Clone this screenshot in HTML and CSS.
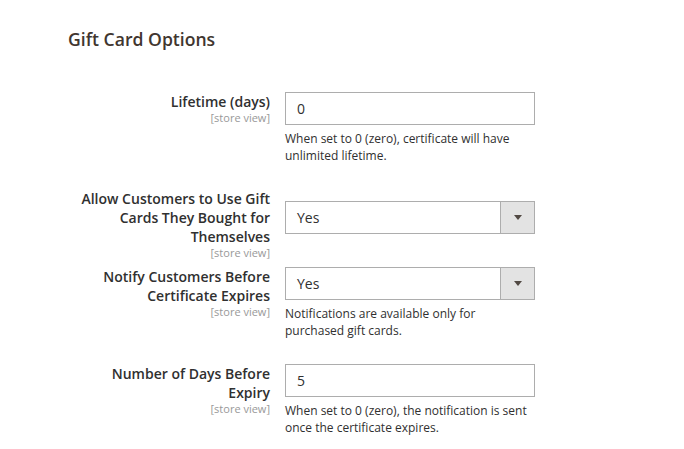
FILE: index.html
```html
<!DOCTYPE html>
<html lang="en">
<head>
<meta charset="utf-8">
<title>Gift Card Options</title>
<link rel="stylesheet" href="styles.css">
</head>
<body>
<div class="page">
  <h2 class="section-title">Gift Card Options</h2>
  <div class="config">
    <div class="row row-note">
      <div class="label"><span class="label-text">Lifetime (days)</span><span class="scope">[store view]</span></div>
      <div class="value">
        <div class="input">0</div>
        <p class="note">When set to 0 (zero), certificate will have unlimited lifetime.</p>
      </div>
    </div>
    <div class="row">
      <div class="label"><span class="label-text">Allow Customers to Use Gift Cards They Bought for Themselves</span><span class="scope">[store view]</span></div>
      <div class="value value-offset">
        <div class="select"><span class="select-text">Yes</span><span class="select-btn"><span class="arrow"></span></span></div>
      </div>
    </div>
    <div class="row row-note">
      <div class="label"><span class="label-text">Notify Customers Before Certificate Expires</span><span class="scope">[store view]</span></div>
      <div class="value">
        <div class="select"><span class="select-text">Yes</span><span class="select-btn"><span class="arrow"></span></span></div>
        <p class="note">Notifications are available only for purchased gift cards.</p>
      </div>
    </div>
    <div class="row row-note">
      <div class="label"><span class="label-text">Number of Days Before Expiry</span><span class="scope">[store view]</span></div>
      <div class="value">
        <div class="input">5</div>
        <p class="note">When set to 0 (zero), the notification is sent once the certificate expires.</p>
      </div>
    </div>
  </div>
</div>
</body>
</html>
```
FILE: styles.css
```css
* { box-sizing: border-box; }
html, body { margin: 0; padding: 0; background: #fff; }
body {
  font-family: "Open Sans", "Liberation Sans", sans-serif;
  color: #303030;
}
.page {
  padding: 27px 0 0 68px;
}
.section-title {
  margin: 0;
  font-size: 17.6px;
  line-height: 24px;
  font-weight: 600;
  color: #41362f;
}
.config {
  margin: 41px 0 0 2px;
  display: flex;
  flex-direction: column;
  gap: 8px;
}
.row {
  display: grid;
  grid-template-columns: 200px 250px;
  column-gap: 15px;
  align-items: start;
}
.row-note { padding-bottom: 17px; }
.label {
  display: flex;
  flex-direction: column;
  align-items: flex-end;
  text-align: right;
}
.label-text {
  font-size: 14px;
  line-height: 19px;
  font-weight: 600;
  color: #303030;
}
.scope {
  font-size: 11px;
  line-height: 13px;
  color: #999;
}
.value-offset { margin-top: 12px; }
.input {
  height: 33px;
  border: 1px solid #adadad;
  padding: 0 11px;
  font-size: 14px;
  line-height: 31px;
  color: #303030;
  background: #fff;
}
.select {
  height: 33px;
  border: 1px solid #adadad;
  display: flex;
  background: #fff;
}
.select-text {
  flex: 1;
  padding: 0 11px;
  font-size: 14px;
  line-height: 31px;
  color: #303030;
}
.select-btn {
  width: 34px;
  border-left: 1px solid #adadad;
  background: #e3e3e3;
  display: flex;
  align-items: center;
  justify-content: center;
}
.arrow {
  width: 0;
  height: 0;
  border-left: 4px solid transparent;
  border-right: 4px solid transparent;
  border-top: 5px solid #514943;
}
.note {
  margin: 5px 0 0;
  font-size: 12px;
  line-height: 17px;
  color: #303030;
}
```
